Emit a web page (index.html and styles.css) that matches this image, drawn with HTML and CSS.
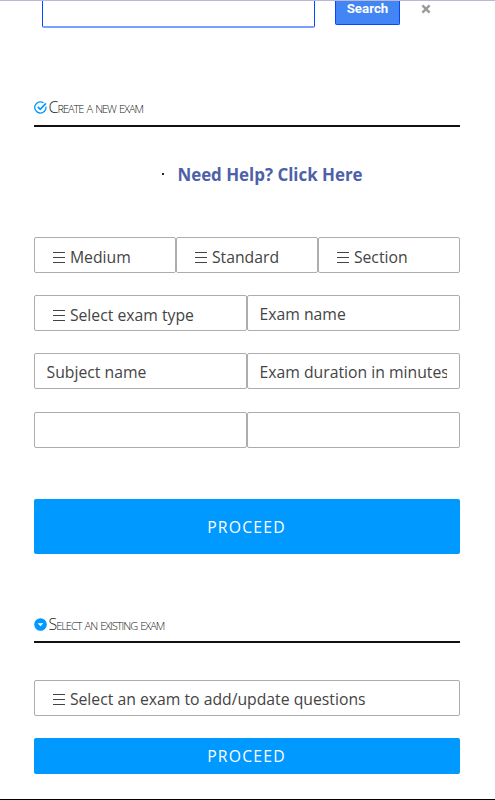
FILE: index.html
```html
<!DOCTYPE html>
<html lang="en">
<head>
  <meta charset="UTF-8">
  <title>Create exam</title>
  <meta name="viewport" content="width=device-width, initial-scale=1.0">
  <link rel="stylesheet" href="styles.css">
</head>
<body>

  <div class="search-bar">
    <input class="search-input" type="text" aria-label="Search">
    <button class="search-button">Search</button>
    <svg class="search-clear" viewBox="0 0 10 10"><path d="M1.4 1.4 8.6 8.6M8.6 1.4 1.4 8.6"/></svg>
  </div>

  <main class="content">
    <h2 class="section-title">
      <svg class="title-icon" viewBox="0 0 13 13">
        <path class="ring" d="M11.9 5.6A5.6 5.6 0 1 1 9.5 1.8"/>
        <path class="tick" d="M3.8 5.9 6.2 8.3 11.9 2.3"/>
      </svg>
      <span>Create a new exam</span>
    </h2>

    <p class="help"><span class="dot"></span><a href="#">Need Help? Click Here</a></p>

    <form class="exam-form">
      <div class="row">
        <div class="field select"><i class="bars"></i>Medium</div>
        <div class="field select"><i class="bars"></i>Standard</div>
        <div class="field select"><i class="bars"></i>Section</div>
      </div>
      <div class="row">
        <div class="field select"><i class="bars"></i>Select exam type</div>
        <input class="field" type="text" placeholder="Exam name">
      </div>
      <div class="row">
        <input class="field" type="text" placeholder="Subject name">
        <input class="field" type="text" placeholder="Exam duration in minutes">
      </div>
      <div class="row">
        <input class="field" type="text" aria-label="Date">
        <input class="field" type="text" aria-label="Time">
      </div>
      <button class="proceed large" type="button">PROCEED</button>
    </form>

    <h2 class="section-title">
      <svg class="title-icon" viewBox="0 0 13 13">
        <circle class="disc" cx="6.5" cy="6.5" r="6.3"/>
        <path class="caret" d="M3.6 5.2h5.8L6.5 8.3z"/>
      </svg>
      <span>Select an existing exam</span>
    </h2>

    <form class="existing-form">
      <div class="row">
        <div class="field select"><i class="bars"></i>Select an exam to add/update questions</div>
      </div>
      <button class="proceed" type="button">PROCEED</button>
    </form>
  </main>

</body>
</html>
```
FILE: styles.css
```css
* {
  box-sizing: border-box;
}

body {
  margin: 0;
  height: 800px;
  overflow: hidden;
  display: flex;
  flex-direction: column;
  background: #fff;
  color: #444;
  font-family: "Open Sans", "Noto Sans", sans-serif;
  font-size: 16px;
  border-top: 1px solid #b8b8d8;
  border-bottom: 1px solid #000;
}

.search-bar {
  display: flex;
  align-items: flex-start;
  height: 27px;
  padding-left: 42px;
  flex-shrink: 0;
}

.search-input {
  width: 273px;
  height: 27px;
  border: 1px solid #0546ff;
  border-top: 0;
  border-bottom: 2px solid #7c9fff;
  border-radius: 0 0 2px 2px;
  outline: none;
}

.search-button {
  width: 65px;
  height: 24px;
  margin-left: 20px;
  padding: 0 0 8px;
  border: 1px solid #0546ff;
  border-top: 0;
  border-radius: 0 0 2px 2px;
  background: #4285f4;
  color: #fff;
  font: bold 13.3px/15px Roboto, sans-serif;
}

.search-clear {
  width: 10px;
  height: 10px;
  margin: 3px 0 0 21px;
  fill: none;
  stroke: #999;
  stroke-width: 2.4;
}

.content {
  padding: 0 35.5px 0 33.5px;
}

.section-title {
  display: flex;
  align-items: center;
  gap: 2px;
  height: 30px;
  margin: 69px 0 0;
  padding-bottom: 8px;
  border-bottom: 2px solid #111;
  color: #222;
  font-size: 16px;
  font-weight: 300;
  font-variant: small-caps;
  letter-spacing: -1.03px;
}

.title-icon {
  width: 13px;
  height: 13px;
  fill: none;
  stroke: #0099ff;
}

.ring {
  stroke-width: 1.3;
}

.tick {
  stroke-width: 1.7;
}

.disc {
  fill: #0099ff;
  stroke: none;
}

.caret {
  fill: #fff;
  stroke: none;
}

.help {
  display: flex;
  align-items: center;
  justify-content: center;
  gap: 13px;
  height: 24px;
  margin: 35px 0 0 32px;
  font-size: 16.9px;
  font-weight: bold;
}

.help a {
  color: #4d60a8;
  text-decoration: none;
}

.dot {
  width: 2px;
  height: 2px;
  background: #223;
}

.exam-form {
  margin-top: 51px;
}

.row {
  display: grid;
  grid-auto-columns: minmax(0, 1fr);
  grid-auto-flow: column;
  height: 36px;
  margin-bottom: 22.2px;
}

.field {
  width: 100%;
  height: 36px;
  padding: 1px 12px 0;
  border: 1px solid #adadad;
  border-radius: 2px;
  background: #fff;
  color: #444;
  font: 15.75px/33px "Open Sans", "Noto Sans", sans-serif;
  white-space: nowrap;
}

.field::placeholder {
  color: #444;
}

.select {
  display: flex;
  align-items: center;
  padding: 4px 0 0 18.4px;
}

.bars {
  width: 12px;
  height: 11px;
  margin-right: 5px;
  border-top: 1px solid #444;
  border-bottom: 1px solid #444;
  background: linear-gradient(#444, #444) center / 100% 1px no-repeat;
}

.proceed {
  display: block;
  width: 100%;
  height: 36px;
  padding: 0;
  border: 0;
  border-radius: 2px;
  background: #0099ff;
  color: #fff;
  font: 15.75px "Open Sans", "Noto Sans", sans-serif;
  letter-spacing: 1.2px;
}

.proceed.large {
  height: 55px;
  margin-top: 51px;
  padding-top: 1px;
}

.exam-form + .section-title {
  margin-top: 59px;
  padding-bottom: 5px;
}

.existing-form {
  margin-top: 37px;
}
```
